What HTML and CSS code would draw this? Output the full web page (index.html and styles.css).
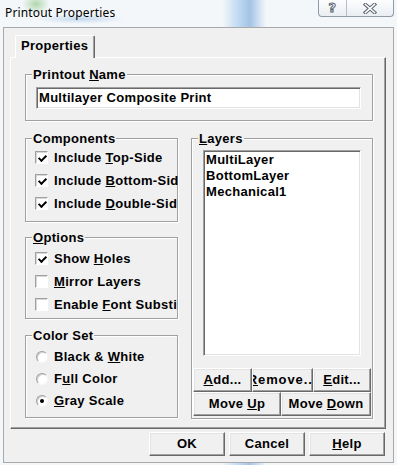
FILE: index.html
```html
<!DOCTYPE html>
<html>
<head>
<meta charset="utf-8">
<title>Printout Properties</title>
<link rel="stylesheet" href="styles.css">
</head>
<body>
<div class="window">
  <div class="titlebar">
    <span class="title">Printout Properties</span>
    <div class="caption">
      <span class="cap cap-help">?</span>
      <span class="cap cap-close">
        <svg width="14" height="11" viewBox="0 0 14 11">
          <path d="M2.5 1.5 L11.5 9.5 M11.5 1.5 L2.5 9.5" stroke="#5a6470" stroke-width="3.6" stroke-linecap="square" fill="none"/>
          <path d="M2.5 1.5 L11.5 9.5 M11.5 1.5 L2.5 9.5" stroke="#ffffff" stroke-width="1.6" stroke-linecap="square" fill="none"/>
        </svg>
      </span>
    </div>
  </div>
  <div class="dialog">
    <div class="tabs"><span class="tab">Properties</span></div>
    <div class="panel">
      <div class="group name-group">
        <span class="gtitle">Printout <u>N</u>ame</span>
        <div class="textbox">Multilayer Composite Print</div>
      </div>
      <div class="columns">
        <div class="left-col">
          <div class="group comp">
            <span class="gtitle">Components</span>
            <div class="rows">
              <div class="row"><span class="check on"></span><span class="label">Include <u>T</u>op-Side</span></div>
              <div class="row"><span class="check on"></span><span class="label">Include <u>B</u>ottom-Sid</span></div>
              <div class="row"><span class="check on"></span><span class="label">Include <u>D</u>ouble-Sid</span></div>
            </div>
          </div>
          <div class="group opts">
            <span class="gtitle"><u>O</u>ptions</span>
            <div class="rows">
              <div class="row"><span class="check on"></span><span class="label">Show <u>H</u>oles</span></div>
              <div class="row"><span class="check"></span><span class="label"><u>M</u>irror Layers</span></div>
              <div class="row"><span class="check"></span><span class="label">Enable <u>F</u>ont Substi</span></div>
            </div>
          </div>
          <div class="group colors">
            <span class="gtitle">Color Set</span>
            <div class="rows">
              <div class="row"><span class="radio"></span><span class="label">Black &amp; <u>W</u>hite</span></div>
              <div class="row"><span class="radio"></span><span class="label">F<u>u</u>ll Color</span></div>
              <div class="row"><span class="radio on"></span><span class="label"><u>G</u>ray Scale</span></div>
            </div>
          </div>
        </div>
        <div class="group layers">
          <span class="gtitle"><u>L</u>ayers</span>
          <div class="listbox">
            <div class="item">MultiLayer</div>
            <div class="item">BottomLayer</div>
            <div class="item">Mechanical1</div>
          </div>
          <div class="btn-rows">
            <div class="btn-row">
              <span class="btn w-add"><span class="bt"><u>A</u>dd...</span></span>
              <span class="btn w-remove"><span class="bt"><u>R</u>emove...</span></span>
              <span class="btn w-edit"><span class="bt"><u>E</u>dit...</span></span>
            </div>
            <div class="btn-row">
              <span class="btn w-up"><span class="bt">Move <u>U</u>p</span></span>
              <span class="btn w-down"><span class="bt">Move <u>D</u>own</span></span>
            </div>
          </div>
        </div>
      </div>
    </div>
    <div class="footer">
      <span class="btn fbtn"><span class="bt">OK</span></span>
      <span class="btn fbtn"><span class="bt">Cancel</span></span>
      <span class="btn fbtn"><span class="bt"><u>H</u>elp</span></span>
    </div>
  </div>
</div>
</body>
</html>
```
FILE: styles.css
```css
* { box-sizing: border-box; }
html, body { margin: 0; padding: 0; }
body {
  width: 397px;
  height: 465px;
  overflow: hidden;
  font-family: "Liberation Sans", Arial, sans-serif;
  font-size: 13px;
  font-weight: bold;
  letter-spacing: 0.3px;
  color: #000;
}
u { text-decoration: underline; text-underline-offset: 1px; }

.window {
  height: 465px;
  background-color: #f4f7fa;
  background-image:
    radial-gradient(ellipse 14px 10px at 36px 4px, rgba(120, 190, 110, 0.55), transparent),
    radial-gradient(ellipse 45px 5px at 80px 19px, rgba(140, 180, 225, 0.45), transparent),
    linear-gradient(90deg, transparent 222px, rgba(150, 195, 235, 0.55) 238px, rgba(110, 160, 215, 0.6) 250px, transparent 266px);
  background-repeat: no-repeat;
}

.titlebar {
  height: 27px;
  display: flex;
  justify-content: space-between;
  align-items: flex-start;
}
.title {
  font-family: "Noto Sans", sans-serif;
  font-weight: normal;
  font-size: 12px;
  letter-spacing: 0.15px;
  line-height: 17px;
  margin: 4px 0 0 5px;
}
.caption {
  display: flex;
  height: 17px;
  margin-right: 3px;
  border: 1px solid #8e9aa6;
  border-top: none;
  border-radius: 0 0 4px 4px;
  background: linear-gradient(#fdfdfe, #eaeef2);
}
.cap {
  display: flex;
  align-items: center;
  justify-content: center;
}
.cap-help {
  width: 28px;
  border-right: 1px solid #b4bec8;
  font-family: "DejaVu Sans", sans-serif;
  font-size: 13px;
  font-weight: bold;
  color: #fff;
  -webkit-text-stroke: 1px #5a6470;
  line-height: 16px;
}
.cap-close { width: 46px; }

.dialog {
  margin-left: 3px;
  width: 391px;
  height: 436px;
  border: 1px solid #a9a9a9;
  background: #f0f0f0;
  padding: 7px 0 0 6px;
}

.tabs {
  display: flex;
  padding-left: 5px;
}
.tab {
  position: relative;
  z-index: 1;
  width: 80px;
  height: 23px;
  margin-bottom: -1px;
  background: #f0f0f0;
  border-top: 1px solid #fff;
  border-left: 1px solid #fff;
  border-right: 1px solid #696969;
  box-shadow: inset -1px 0 #a0a0a0;
  border-radius: 2px 2px 0 0;
  padding-left: 5px;
  line-height: 20px;
}

.panel {
  width: 376px;
  height: 372px;
  border: 1px solid;
  border-color: #fff #696969 #696969 #fff;
  box-shadow: inset -1px -1px #a0a0a0;
  padding: 16px 0 0 14px;
}

.group {
  border: 1px solid #a0a0a0;
  box-shadow: inset 1px 1px #fff, 1px 1px #fff;
}
.gtitle {
  display: table;
  margin: -7px 0 0 6px;
  padding: 0 1px;
  line-height: 14px;
  background: #f0f0f0;
  white-space: nowrap;
}

.name-group {
  width: 348px;
  height: 47px;
}
.textbox {
  margin: 5px 0 0 10px;
  width: 325px;
  height: 22px;
  background: #fff;
  border: 1px solid;
  border-color: #a0a0a0 #fff #fff #a0a0a0;
  box-shadow: inset 1px 1px #696969, inset -1px -1px #e3e3e3;
  padding: 2px 0 0 2px;
  line-height: 15px;
  white-space: nowrap;
  overflow: hidden;
}

.columns {
  display: flex;
  gap: 13px;
  margin-top: 17px;
}
.left-col {
  width: 153px;
  display: flex;
  flex-direction: column;
}

.rows {
  display: flex;
  flex-direction: column;
  padding-left: 9px;
}
.row {
  display: flex;
  align-items: center;
  gap: 6px;
  height: 23px;
  line-height: 23px;
  white-space: nowrap;
}
.label { white-space: nowrap; }

.comp { height: 84px; }
.opts { height: 82px; margin-top: 15px; }
.opts .rows { padding-top: 2px; }
.colors { height: 83px; margin-top: 16px; }
.colors .rows { padding-top: 3px; }
.colors .row { height: 22px; line-height: 22px; }

.check {
  flex: none;
  width: 13px;
  height: 13px;
  background: #fff;
  border: 1px solid;
  border-color: #a0a0a0 #fff #fff #a0a0a0;
  box-shadow: inset 1px 1px #d8d8d8;
  position: relative;
}
.check.on::after {
  content: "";
  position: absolute;
  left: 2px;
  top: 1px;
  width: 6px;
  height: 3px;
  border-left: 2px solid #000;
  border-bottom: 2px solid #000;
  transform: translate(0.5px, 2px) rotate(-45deg);
}
.radio {
  flex: none;
  width: 12px;
  height: 12px;
  border-radius: 50%;
  background: #fff;
  border: 1px solid;
  border-color: #a0a0a0 #f6f6f6 #f6f6f6 #a0a0a0;
  box-shadow: inset 1px 1px #d0d0d0;
  position: relative;
  margin-left: 1px;
}
.radio.on::after {
  content: "";
  position: absolute;
  left: 3px;
  top: 3px;
  width: 4px;
  height: 4px;
  border-radius: 50%;
  background: #000;
}

.layers {
  width: 182px;
  height: 281px;
}
.listbox {
  margin: 4px 0 0 11px;
  width: 158px;
  height: 206px;
  background: #fff;
  border: 1px solid;
  border-color: #a0a0a0 #fff #fff #a0a0a0;
  box-shadow: inset 1px 1px #696969, inset -1px -1px #e3e3e3;
  padding: 1px 0 0 2px;
  line-height: 16px;
}

.btn-rows {
  margin: 12px 0 0 1px;
  display: flex;
  flex-direction: column;
}
.btn-row { display: flex; }
.btn {
  flex: none;
  height: 24px;
  background: #f0f0f0;
  border: 1px solid;
  border-color: #fff #696969 #696969 #fff;
  box-shadow: inset -1px -1px #a0a0a0, inset 1px 1px #e3e3e3;
  display: flex;
  align-items: center;
  justify-content: center;
  overflow: hidden;
  line-height: 16px;
}
.bt { flex: none; white-space: nowrap; }
.w-add { width: 59px; }
.w-remove { width: 61px; }
.w-remove .bt { letter-spacing: 0.9px; }
.w-edit { width: 58px; }
.w-up { width: 88px; }
.w-down { width: 90px; }

.footer {
  display: flex;
  justify-content: flex-end;
  gap: 4px;
  margin-top: 3px;
  padding-right: 8px;
}
.fbtn { width: 76px; }
```
